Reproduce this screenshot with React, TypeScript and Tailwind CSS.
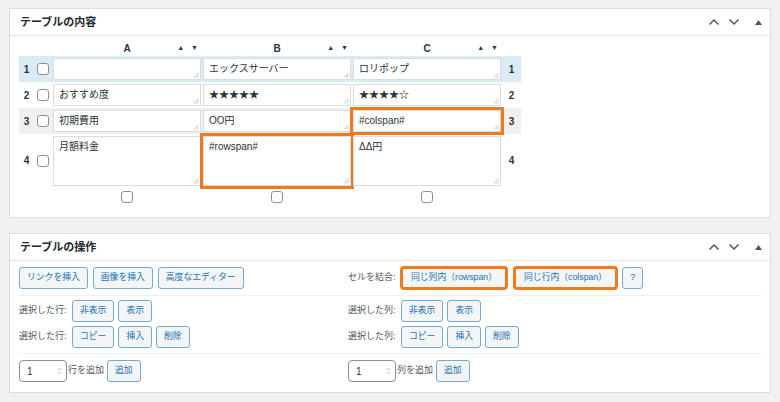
import React from "react";

const FONT = "font-['Liberation_Sans','Noto_Sans_CJK_JP',sans-serif]";

function Up() {
  return (
    <svg width="12" height="8" viewBox="0 0 12 8">
      <path d="M1.5 6.5 L6 2 L10.5 6.5" stroke="#50575e" strokeWidth="1.5" fill="none" />
    </svg>
  );
}
function Down() {
  return (
    <svg width="12" height="8" viewBox="0 0 12 8">
      <path d="M1.5 1.5 L6 6 L10.5 1.5" stroke="#50575e" strokeWidth="1.5" fill="none" />
    </svg>
  );
}
function Tri() {
  return (
    <svg width="7" height="5" viewBox="0 0 7 5">
      <path d="M0 5 L3.5 0 L7 5 Z" fill="#50575e" />
    </svg>
  );
}

function PanelHeader({ title }: { title: string }) {
  return (
    <div className="flex items-center h-[27px] border-b border-[#e2e4e7] pl-[10px] pr-[8px]">
      <div className="text-[11px] font-semibold text-[#23282d] flex-1">{title}</div>
      <div className="flex items-center gap-[8px]">
        <Up />
        <Down />
        <div className="w-[14px] flex justify-end">
          <Tri />
        </div>
      </div>
    </div>
  );
}

function Handle() {
  return (
    <svg className="absolute right-[1px] bottom-[1px]" width="6" height="6" viewBox="0 0 6 6">
      <path d="M5.5 1 L1 5.5 M5.5 3.5 L3.5 5.5" stroke="#a7aaad" strokeWidth="0.8" />
    </svg>
  );
}

function Checkbox() {
  return <div className="w-[12px] h-[12px] rounded-[3px] border border-[#8c8f94] bg-white" />;
}

function Cell({ text, tall, hl }: { text: string; tall?: boolean; hl?: boolean }) {
  return (
    <div className="w-[150px] flex justify-center">
      <div
        className={
          "relative w-[148px] bg-white border border-[#dcdcde] px-[5px] pt-[3px] text-[10px] text-[#2c3338] leading-[14px] " +
          (tall ? "h-[50px] " : "h-[22px] ") +
          (hl ? "ring-[3px] ring-[#f27a1e]" : "")
        }
      >
        {text}
        <Handle />
      </div>
    </div>
  );
}

function TableRow({
  n,
  cells,
  bg,
  tall,
  hl,
}: {
  n: number;
  cells: string[];
  bg?: string;
  tall?: boolean;
  hl?: number;
}) {
  return (
    <div className={"flex items-center " + (tall ? "h-[53px] " : "h-[26px] ") + (bg || "")}>
      <div className="w-[15px] text-center text-[10px] font-bold text-[#2c3338]">{n}</div>
      <div className="w-[18px] flex justify-center">
        <Checkbox />
      </div>
      {cells.map((c, i) => (
        <Cell key={i} text={c} tall={tall} hl={hl === i} />
      ))}
      <div className="w-[19px] text-center text-[10px] font-bold text-[#2c3338]">{n}</div>
    </div>
  );
}

function ColHead({ l }: { l: string }) {
  return (
    <div className="w-[150px] grid grid-cols-[1fr_auto_1fr] items-center">
      <div />
      <div className="text-[10px] font-bold text-[#2c3338]">{l}</div>
      <div className="flex justify-end gap-[7px] pr-[4px] text-[7px] text-[#2c3338]">
        <span>▲</span>
        <span>▼</span>
      </div>
    </div>
  );
}

function Btn({ children, hl }: { children: React.ReactNode; hl?: boolean }) {
  return (
    <div
      className={
        "h-[22px] px-[7px] flex items-center border border-[#7aa7cc] rounded-[3px] bg-[#f3f5f6] text-[8.8px] text-[#2271b1] whitespace-nowrap " +
        (hl ? "outline-[3px] outline-solid outline-[#f27a1e] outline-offset-[-2px] px-[9px]" : "")
      }
    >
      {children}
    </div>
  );
}

function Label({ children }: { children: React.ReactNode }) {
  return <div className="text-[9px] text-[#50575e] w-[49px] shrink-0 whitespace-nowrap">{children}</div>;
}

function NumInput() {
  return (
    <div className="w-[48px] h-[22px] border border-[#8c8f94] rounded-[4px] bg-white flex items-center pl-[7px] pr-[4px]">
      <span className="text-[10px] text-[#2c3338] flex-1">1</span>
      <svg width="5" height="8" viewBox="0 0 5 8">
        <path d="M1 3 L2.5 1.5 L4 3 M1 5 L2.5 6.5 L4 5" stroke="#a7aaad" strokeWidth="0.8" fill="none" />
      </svg>
    </div>
  );
}

export default function App() {
  return (
    <div className={"w-[780px] h-[402px] bg-[#f1f1f1] pt-[8px] px-[9px] " + FONT}>
      {/* Panel 1 */}
      <div className="bg-white border border-[#dcdcde] h-[210px]">
        <PanelHeader title="テーブルの内容" />
        <div className="pl-[9px] pt-[4px]">
          <div className="flex h-[16px] items-center">
            <div className="w-[33px]" />
            <ColHead l="A" />
            <ColHead l="B" />
            <ColHead l="C" />
          </div>
          <div className="w-[502px]">
            <TableRow n={1} cells={["", "エックスサーバー", "ロリポップ"]} bg="bg-[#d9ebf5]" />
            <TableRow n={2} cells={["おすすめ度", "★★★★★", "★★★★☆"]} />
            <TableRow n={3} cells={["初期費用", "OO円", "#colspan#"]} bg="bg-[#f0f0f1]" hl={2} />
            <TableRow n={4} cells={["月額料金", "#rowspan#", "ΔΔ円"]} tall hl={1} />
            <div className="flex items-center h-[20px]">
              <div className="w-[33px]" />
              {[0, 1, 2].map((i) => (
                <div key={i} className="w-[150px] flex justify-center">
                  <Checkbox />
                </div>
              ))}
            </div>
          </div>
        </div>
      </div>

      {/* Panel 2 */}
      <div className="mt-[15px] bg-white border border-[#dcdcde] h-[160px]">
        <PanelHeader title="テーブルの操作" />
        <div className="px-[9px]">
          <div className="flex pt-[6px] pb-[6px] border-b border-[#f0f0f1] pr-[10px]">
            <div className="w-[329px] flex gap-[5px]">
              <Btn>リンクを挿入</Btn>
              <Btn>画像を挿入</Btn>
              <Btn>高度なエディター</Btn>
            </div>
            <div className="flex items-center">
              <Label>セルを結合:</Label>
              <div className="w-[4px]" />
              <Btn hl>同じ列内（rowspan）</Btn>
              <div className="w-[7px]" />
              <Btn hl>同じ行内（colspan）</Btn>
              <div className="w-[5px]" />
              <Btn>?</Btn>
            </div>
          </div>
          <div className="flex pt-[4px] pb-[5px] border-b border-[#f0f0f1]">
            <div className="w-[329px] flex flex-col gap-[4px]">
              <div className="flex items-center gap-[4px]">
                <Label>選択した行:</Label>
                <Btn>非表示</Btn>
                <Btn>表示</Btn>
              </div>
              <div className="flex items-center gap-[4px]">
                <Label>選択した行:</Label>
                <Btn>コピー</Btn>
                <Btn>挿入</Btn>
                <Btn>削除</Btn>
              </div>
            </div>
            <div className="flex flex-col gap-[4px]">
              <div className="flex items-center gap-[4px]">
                <Label>選択した列:</Label>
                <Btn>非表示</Btn>
                <Btn>表示</Btn>
              </div>
              <div className="flex items-center gap-[4px]">
                <Label>選択した列:</Label>
                <Btn>コピー</Btn>
                <Btn>挿入</Btn>
                <Btn>削除</Btn>
              </div>
            </div>
          </div>
          <div className="flex pt-[6px]">
            <div className="w-[329px] flex items-center">
              <NumInput />
              <span className="text-[9px] text-[#50575e] ml-[1px] mr-[3px]">行を追加</span>
              <Btn>追加</Btn>
            </div>
            <div className="flex items-center">
              <NumInput />
              <span className="text-[9px] text-[#50575e] ml-[1px] mr-[3px]">列を追加</span>
              <Btn>追加</Btn>
            </div>
          </div>
        </div>
      </div>
    </div>
  );
}
